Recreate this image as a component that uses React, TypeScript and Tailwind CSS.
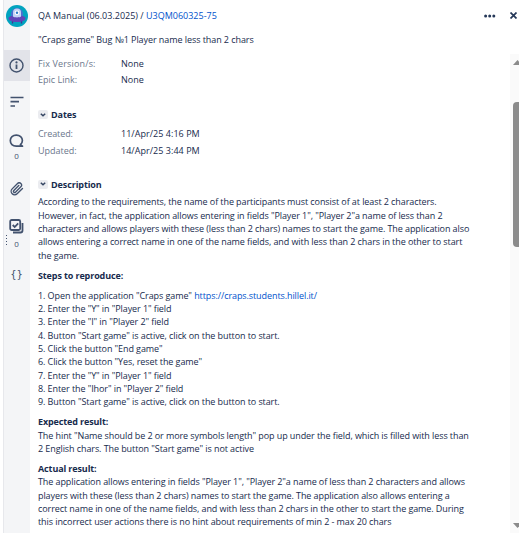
import type { ReactNode } from "react";

function Line({ children, className = "" }: { children: ReactNode; className?: string }) {
  return <div className={`h-[13.33px] whitespace-nowrap ${className}`}>{children}</div>;
}

function Field({ label, value, className = "", labelClass = "" }: { label: string; value: string; className?: string; labelClass?: string }) {
  return (
    <div className={`flex whitespace-nowrap ${className}`}>
      <span className={`w-[83px] text-[#6b778c] ${labelClass}`}>{label}</span>
      <span className="tracking-[0.04px]">{value}</span>
    </div>
  );
}

function SectionHead({ title }: { title: string }) {
  return (
    <div className="flex h-[14px] items-center">
      <span className="flex h-[9px] w-[10px] items-center justify-center rounded-[2px] bg-[#ebecf0]">
        <svg width="6" height="4" viewBox="0 0 6 4" fill="none" stroke="#344563" strokeWidth="1.5">
          <path d="M0.8 0.8 3 2.8 5.2 0.8" />
        </svg>
      </span>
      <b className="ml-[3px] font-bold tracking-[-0.1px]">{title}</b>
    </div>
  );
}

function Avatar() {
  return (
    <svg width="22" height="22" viewBox="0 0 22 22">
      <circle cx="11" cy="11" r="11" fill="#00a3bf" />
      <circle cx="11" cy="9" r="6" fill="#4c6fd0" />
      <path d="M7 13V7.500a4 4 0 0 1 8 0V13Z" fill="#c3d3f5" />
      <circle cx="11" cy="7.800" r="2.300" fill="#fff" />
      <circle cx="11" cy="7.800" r="1.200" fill="#2a7bc8" />
      <path d="M6.500 16v2.500M15.500 16v2.500" stroke="#403294" strokeWidth="1.300" />
      <path d="M2.500 12.800c2-1.800 3-1.800 4-1.600 2 1.600 7 1.600 9 0 1-.2 2-.2 4 1.600.5 2.700-3 4.200-8.500 4.200s-9-1.500-8.500-4.200Z" fill="#6046b8" />
    </svg>
  );
}

export default function App() {
  return (
    <div className="flex h-[533px] w-[519px] overflow-hidden bg-white font-['Open_Sans','Noto_Sans',sans-serif] text-[9px] leading-[13.33px] tracking-[-0.085px] text-[#172b4d]">
      <aside className="relative ml-[3px] flex w-[27px] shrink-0 flex-col border-l border-[#e7e8ec] bg-[#f4f5f7] text-[#42526e]">
        <div className="mt-[5px] ml-[1.500px] h-[45px]"><Avatar /></div>
        <div className="flex h-[31px] w-full items-center bg-[#e2e3e9] pl-[5px]">
          <svg width="15" height="15" viewBox="0 0 15 15" fill="none" stroke="#42526e">
            <circle cx="7.500" cy="7.500" r="6.500" strokeWidth="1.400" />
            <path d="M7.500 6.500v4.500" strokeWidth="1.800" />
            <circle cx="7.500" cy="4.400" r="1.100" fill="#42526e" stroke="none" />
          </svg>
        </div>
        <div className="flex w-[25px] flex-col items-center">
          <svg className="mt-[15px]" width="14" height="12" viewBox="0 0 14 12" stroke="#42526e" strokeWidth="1.700">
            <path d="M0.500 1.500h13M0.500 5.700h8.500M0.500 10h4.500" />
          </svg>
          <svg className="mt-[26px]" width="15" height="14" viewBox="0 0 15 14" fill="none" stroke="#42526e" strokeWidth="1.700">
            <path d="M13.500 12.200H7.200C3.600 12.200 1.300 9.900 1.300 6.600 1.300 3.500 3.800 1.100 7.300 1.100s6.100 2.400 6.100 5.500c0 1.700-.7 3.100-2 4.100l2.100 1.500Z" strokeLinejoin="round" />
          </svg>
          <span className="mt-[1px] text-[8px]">0</span>
          <svg className="mt-[20px]" width="14" height="14" viewBox="0 0 24 24" fill="none" stroke="#42526e" strokeWidth="2.300" strokeLinecap="round">
            <path d="M21.400 11.050l-9.190 9.190a6 6 0 0 1-8.490-8.490l9.190-9.190a4 4 0 0 1 5.660 5.660l-9.200 9.190a2 2 0 0 1-2.830-2.830l8.490-8.480" />
          </svg>
          <svg className="mt-[23px]" width="15" height="15" viewBox="0 0 15 15" fill="none" stroke="#42526e" strokeWidth="1.800">
            <rect x="1.200" y="1" width="10" height="10" rx="1.500" />
            <path d="M3.700 6l2 2 3.500-3.700M13.500 4v7.500a2 2 0 0 1-2 2H4" />
          </svg>
          <span className="mt-[3px] text-[8px]">0</span>
          <span className="mt-[17px] font-['DejaVu_Sans',sans-serif] text-[10px] tracking-[0px]">{"{}"}</span>
        </div>
        <svg className="absolute top-[235px] left-[2px]" width="1" height="10" viewBox="0 0 1 10" fill="#42526e">
          <path d="M0 0h1v1H0zM0 3h1v1H0zM0 6h1v1H0zM0 9h1v1H0z" />
        </svg>
      </aside>

      <div className="flex min-w-0 flex-1 flex-col">
        <header className="h-[54px] shrink-0 pt-[8px] pl-[8px]">
          <div className="flex h-[15px] items-center">
            <span className="tracking-[0px] whitespace-nowrap">QA Manual (06.03.2025) / <span className="text-[#0052cc]">U3QM060325-75</span></span>
            <svg className="ml-auto" width="12" height="4" viewBox="0 0 12 4" fill="#253858">
              <circle cx="1.600" cy="2" r="1.500" /><circle cx="5.700" cy="2" r="1.500" /><circle cx="9.800" cy="2" r="1.500" />
            </svg>
            <svg className="mr-[2px] mb-[1px] ml-[14px]" width="7" height="7" viewBox="0 0 7 7" stroke="#253858" strokeWidth="1.700">
              <path d="M.5.5l6 6M6.500.5l-6 6" />
            </svg>
          </div>
          <div className="mt-[10px] tracking-[-0.07px] whitespace-nowrap">"Craps game" Bug №1 Player name less than 2 chars</div>
        </header>

        <div className="flex min-h-0 flex-1">
          <main className="min-w-0 flex-1 pt-[3px] pl-[8px]">
            <Field label="Fix Version/s:" value="None" labelClass="tracking-[0.15px]" />
            <Field label="Epic Link:" value="None" className="mt-[3px]" labelClass="tracking-[0px]" />
            <div className="mt-[21px]"><SectionHead title="Dates" /></div>
            <Field label="Created:" value="11/Apr/25 4:16 PM" className="mt-[5px]" />
            <Field label="Updated:" value="14/Apr/25 3:44 PM" className="mt-[4px]" labelClass="tracking-[0px]" />
            <div className="mt-[20px]"><SectionHead title="Description" /></div>

            <div className="mt-[4px]">
              <Line>According to the requirements, the name of the participants must consist of at least 2 characters.</Line>
              <Line>However, in fact, the application allows entering in fields "Player 1", "Player 2"a name of less than 2</Line>
              <Line>characters and allows players with these (less than 2 chars) names to start the game. The application also</Line>
              <Line>allows entering a correct name in one of the name fields, and with less than 2 chars in the other to start</Line>
              <Line>the game.</Line>
            </div>
            <Line className="mt-[6.700px] font-bold tracking-[-0.12px]">Steps to reproduce:</Line>
            <div className="mt-[6.700px]">
              <Line>1. Open the application "Craps game" <span className="text-[#0052cc]">https://craps.students.hillel.it/</span></Line>
              <Line>2. Enter the "Y" in "Player 1" field</Line>
              <Line>3. Enter the "I" in "Player 2" field</Line>
              <Line>4. Button "Start game" is active, click on the button to start.</Line>
              <Line>5. Click the button "End game"</Line>
              <Line>6. Click the button "Yes, reset the game"</Line>
              <Line>7. Enter the "Y" in "Player 1" field</Line>
              <Line>8. Enter the "Ihor" in "Player 2" field</Line>
              <Line>9. Button "Start game" is active, click on the button to start.</Line>
            </div>
            <Line className="mt-[6.700px] font-bold tracking-[-0.12px]">Expected result:</Line>
            <Line>The hint "Name should be 2 or more symbols length" pop up under the field, which is filled with less than</Line>
            <Line>2 English chars. The button "Start game" is not active</Line>
            <Line className="mt-[6.700px] font-bold tracking-[-0.12px]">Actual result:</Line>
            <Line>The application allows entering in fields "Player 1", "Player 2"a name of less than 2 characters and allows</Line>
            <Line>players with these (less than 2 chars) names to start the game. The application also allows entering a</Line>
            <Line>correct name in one of the name fields, and with less than 2 chars in the other to start the game. During</Line>
            <Line>this incorrect user actions there is no hint about requirements of min 2 - max 20 chars</Line>
          </main>
          <div className="flex w-[9px] shrink-0 flex-col items-end overflow-hidden bg-[#fafafa]">
            <svg className="mt-[6px] shrink-0" width="6" height="5" viewBox="0 0 6 5" fill="#8b8b8b"><path d="M0 5 4.500 0 6 1.500V5Z" /></svg>
            <div className="mt-[37px] h-[145px] w-[6px] shrink-0 rounded-l-[4px] bg-[#8b8b8b]" />
            <svg className="mt-auto mb-[5px] shrink-0" width="6" height="5" viewBox="0 0 6 5" fill="#8b8b8b"><path d="M0 0 4.500 5 6 3.500V0Z" /></svg>
          </div>
        </div>
      </div>
    </div>
  );
}
